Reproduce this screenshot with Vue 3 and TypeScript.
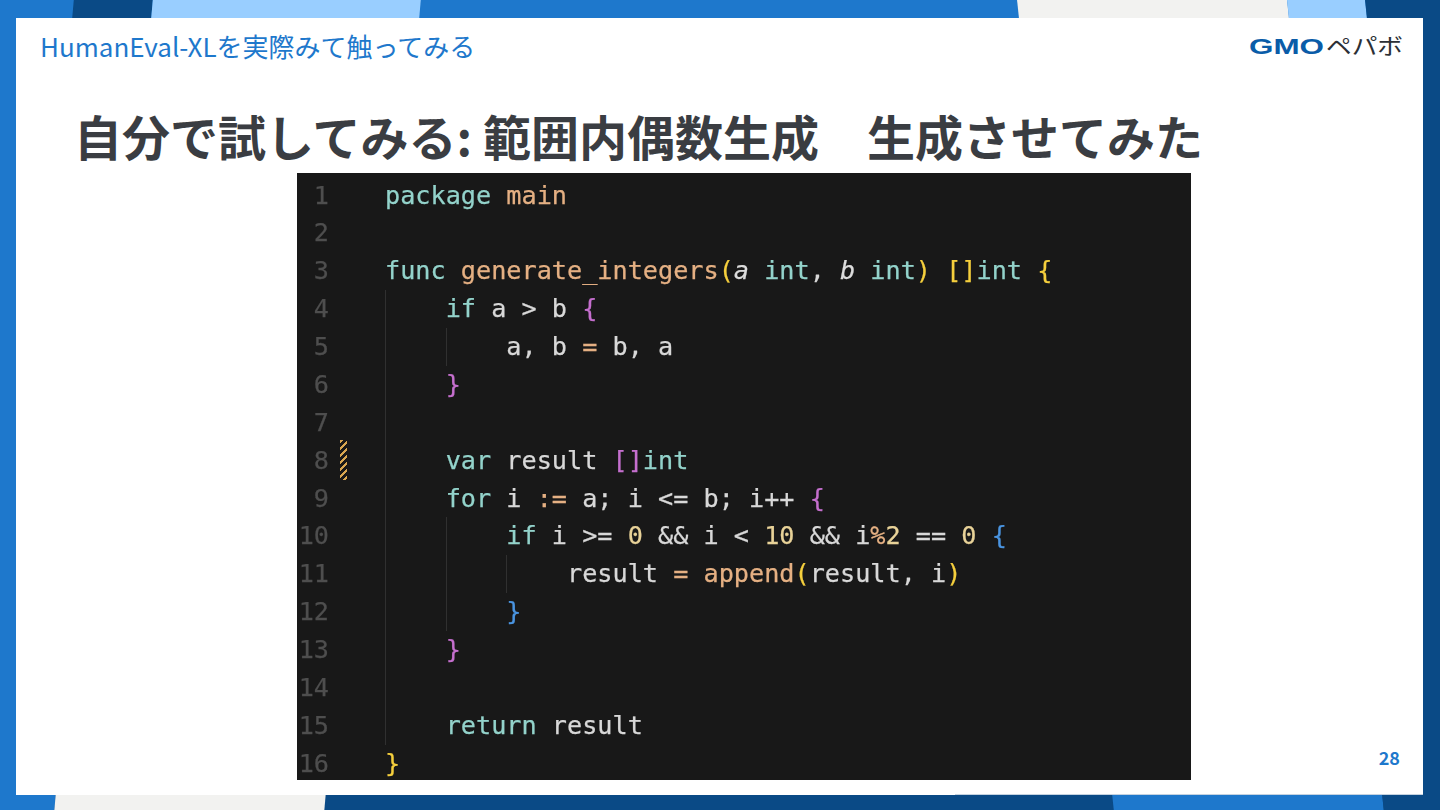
<script setup lang="ts">
type Tok = [string, string?]
interface Line { n: number; toks: Tok[]; guides: number[]; mark?: boolean }

const raw: Array<[Tok[], number[]]> = [
  [[['package', 'k'], [' '], ['main', 'f']], []],
  [[], []],
  [[['func', 'k'], [' '], ['generate_integers', 'f'], ['(', 'y'], ['a', 'i'], [' '], ['int', 'k'], [', '], ['b', 'i'], [' '], ['int', 'k'], [')', 'y'], [' '], ['[]', 'y'], ['int', 'k'], [' '], ['{', 'y']], []],
  [[['    '], ['if', 'k'], [' a > b '], ['{', 'p']], [0]],
  [[['        a, b '], ['=', 'f'], [' b, a']], [0, 4]],
  [[['    '], ['}', 'p']], [0]],
  [[], [0]],
  [[['    '], ['var', 'k'], [' result '], ['[]', 'p'], ['int', 'k']], [0]],
  [[['    '], ['for', 'k'], [' i '], [':=', 'f'], [' a; i <= b; i++ '], ['{', 'p']], [0]],
  [[['        '], ['if', 'k'], [' i >= '], ['0', 'c'], [' && i < '], ['10', 'c'], [' && i'], ['%', 'f'], ['2', 'c'], [' == '], ['0', 'c'], [' '], ['{', 'b']], [0, 4]],
  [[['            result '], ['=', 'f'], [' '], ['append', 'f'], ['(', 'y'], ['result, i'], [')', 'y']], [0, 4, 8]],
  [[['        '], ['}', 'b']], [0, 4]],
  [[['    '], ['}', 'p']], [0]],
  [[], [0]],
  [[['    '], ['return', 'k'], [' result']], [0]],
  [[['}', 'y']], []],
]

const lines: Line[] = raw.map(([toks, guides], i) => ({ n: i + 1, toks, guides, mark: i === 7 }))
const guideLeft = (col: number): string => `${Math.round(col * 15.17)}px`
</script>

<template>
  <div class="slide">
    <div class="band band-top">
      <i class="seg dark w79 ml73 lean-l"></i>
      <i class="seg light w268 lean-l"></i>
      <i class="fill"></i>
      <i class="seg gray w270 lean-r"></i>
      <i class="seg light w78 lean-r"></i>
      <i class="seg dark w90 lean-r"></i>
    </div>
    <div class="mid">
      <main class="panel">
        <header class="head">
          <span class="crumb">HumanEval-XLを実際みて触ってみる</span>
          <svg class="logo" width="154" height="24" viewBox="0 0 154 24" role="img" aria-label="GMOペパボ">
            <text class="logo-gmo" x="0" y="19" textLength="75" lengthAdjust="spacingAndGlyphs">GMO</text>
            <text class="logo-kana" x="77" y="19" textLength="77" lengthAdjust="spacingAndGlyphs">ペパボ</text>
          </svg>
        </header>
        <h1 class="title">自分で試してみる: 範囲内偶数生成　生成させてみた</h1>
        <section class="code">
          <div v-for="l in lines" :key="l.n" class="line">
            <span class="num">{{ l.n }}</span>
            <span class="gutter"><i v-if="l.mark" class="mark"></i></span>
            <span class="src">
              <i v-for="g in l.guides" :key="g" class="guide" :style="{ left: guideLeft(g) }"></i>
              <span v-for="(t, idx) in l.toks" :key="idx" :class="t[1]">{{ t[0] }}</span>
            </span>
          </div>
        </section>
        <span class="page">28</span>
      </main>
    </div>
    <div class="band band-bottom">
      <i class="seg blue w65 mln10 lean-l"></i>
      <i class="seg gray w270 lean-l"></i>
      <i class="fill"></i>
      <i class="seg blue w270 lean-r"></i>
      <i class="seg dark w70 lean-r"></i>
    </div>
  </div>
</template>

<style>
html, body { margin: 0; padding: 0; background: #fff; }
</style>

<style scoped>
.slide {
  width: 1440px;
  height: 810px;
  display: flex;
  flex-direction: column;
  overflow: hidden;
  font-family: "Noto Sans CJK JP", "Noto Sans", sans-serif;
}
.band { display: flex; flex: none; overflow: hidden; }
.band-top { height: 18px; background: #1e78cc; }
.band-bottom { height: 15px; background: #0a4a86; }
.seg { display: block; flex: none; height: 100%; }
.fill { flex: 1; }
.dark { background: #0a4a86; }
.light { background: #99ceff; }
.gray { background: #f2f2f0; }
.blue { background: #1e78cc; }
.w65 { width: 65px; }
.w70 { width: 70px; }
.w78 { width: 78px; }
.w79 { width: 79px; }
.w90 { width: 90px; }
.w268 { width: 268px; }
.w270 { width: 270px; }
.ml73 { margin-left: 73px; }
.mln10 { margin-left: -10px; }
.lean-l { transform: skewX(-5deg); }
.lean-r { transform: skewX(6deg); }
.band-top .w90 { margin-right: -16px; }
.band-bottom .w70 { margin-right: -13px; }

.mid {
  flex: 1;
  min-height: 0;
  display: flex;
  background: linear-gradient(90deg, #1e78cc 0 50%, #0a4a86 50% 100%);
  padding: 0 17px 0 16px;
}
.panel {
  position: relative;
  flex: 1;
  background: #fff;
  display: flex;
  flex-direction: column;
}
.panel::after {
  content: "";
  position: absolute;
  right: 0;
  bottom: 0;
  width: 468px;
  height: 1px;
  background: #c4d2e0;
}
.head {
  display: flex;
  justify-content: space-between;
  align-items: center;
  height: 58px;
  padding: 0 20px 0 24px;
  flex: none;
}
.crumb {
  font-size: 26px;
  color: #1e78cc;
  line-height: 56px;
  margin-bottom: 2px;
}
.logo { display: block; overflow: visible; }
.logo-gmo {
  font-family: "Liberation Sans", sans-serif;
  font-weight: 700;
  font-size: 22px;
  fill: #0a5ca8;
}
.logo-kana {
  font-family: "Noto Sans CJK JP", sans-serif;
  font-weight: 400;
  font-size: 22px;
  fill: #2c3036;
}
.title {
  margin: 0;
  box-sizing: border-box;
  padding: 22px 0 0 58px;
  font-size: 48px;
  line-height: 75px;
  height: 97px;
  font-weight: 700;
  color: #3a3d42;
  white-space: nowrap;
  flex: none;
}
.code {
  flex: none;
  align-self: flex-start;
  margin-left: 281px;
  width: 894px;
  height: 607px;
  background: #181818;
  font-family: "DejaVu Sans Mono", monospace;
  font-size: 25.2px;
  color: #d8d8d8;
  -webkit-text-stroke: 0.25px currentColor;
  filter: blur(0.4px);
  overflow: hidden;
  padding-top: 3.5px;
  box-sizing: border-box;
}
.line {
  display: flex;
  height: 37.88px;
  line-height: 37.88px;
}
.num {
  width: 32px;
  flex: none;
  text-align: right;
  color: #4e4e4e;
}
.gutter {
  position: relative;
  width: 56px;
  flex: none;
}
.mark {
  position: absolute;
  left: 11px;
  top: -2px;
  width: 7px;
  height: 40px;
  background: repeating-linear-gradient(135deg, #d8a650 0 2.5px, #181818 2.5px 5px);
}
.src {
  position: relative;
  flex: 1;
  white-space: pre;
}
.guide {
  position: absolute;
  top: 0;
  bottom: 0;
  width: 1px;
  background: #303030;
}
.k { color: #93d3cb; }
.f { color: #e5b083; }
.y { color: #f5cf3d; }
.p { color: #c56fce; }
.b { color: #4a94e0; }
.c { color: #e8d298; }
.i { font-style: italic; color: #dcdcdc; }
.page {
  position: absolute;
  right: 23px;
  bottom: 27px;
  font-size: 18px;
  line-height: 22px;
  font-weight: 700;
  color: #1e78cc;
}
</style>
